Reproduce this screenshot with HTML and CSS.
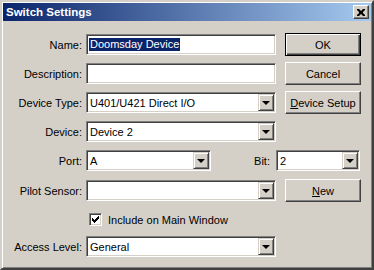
FILE: index.html
```html
<!DOCTYPE html>
<html lang="en">
<head>
    <meta charset="UTF-8">
    <title>Switch Settings</title>
    <link rel="stylesheet" href="styles.css">
</head>
<body>
    <div class="dialog">
        <div class="titlebar">
            <span class="title">Switch Settings</span>
            <button class="close-btn" aria-label="Close">
                <svg width="8" height="7" viewBox="0 0 8 7"><path d="M0 0h2l2 2 2-2h2v1l-2 2v1l2 2v1h-2l-2-2-2 2h-2v-1l2-2v-1l-2-2z" fill="#000"/></svg>
            </button>
        </div>

        <div class="content">
            <div class="row">
                <label class="label">Name:</label>
                <div class="field"><span class="selected">Doomsday Device</span></div>
                <button class="btn default">OK</button>
            </div>

            <div class="row">
                <label class="label">Description:</label>
                <div class="field"></div>
                <button class="btn">Cancel</button>
            </div>

            <div class="row">
                <label class="label">Device Type:</label>
                <div class="field select"><span class="value">U401/U421 Direct I/O</span><span class="arrow"></span></div>
                <button class="btn"><u>D</u>evice Setup</button>
            </div>

            <div class="row">
                <label class="label">Device:</label>
                <div class="field select"><span class="value">Device 2</span><span class="arrow"></span></div>
            </div>

            <div class="row port-row">
                <label class="label">Port:</label>
                <div class="field select port"><span class="value">A</span><span class="arrow"></span></div>
                <label class="bit-label">Bit:</label>
                <div class="field select bit"><span class="value">2</span><span class="arrow"></span></div>
            </div>

            <div class="row">
                <label class="label">Pilot Sensor:</label>
                <div class="field select"><span class="value"></span><span class="arrow"></span></div>
                <button class="btn"><u>N</u>ew</button>
            </div>

            <div class="row check-row">
                <span class="checkbox">
                    <svg width="7" height="7" viewBox="0 0 7 7"><path d="M0 2h1v1h1v1h1v-1h1v-1h1v-1h1v-1h1v3h-1v1h-1v1h-1v1h-1v1h-1v-1h-1v-1h-1z" fill="#000"/></svg>
                </span>
                <span class="check-text">Include on Main Window</span>
            </div>

            <div class="row">
                <label class="label">Access Level:</label>
                <div class="field select"><span class="value">General</span><span class="arrow"></span></div>
            </div>
        </div>
    </div>
</body>
</html>
```

FILE: styles.css
```css
html, body {
    margin: 0;
    padding: 0;
    background: #d4d0c8;
}
body {
    font-family: "Liberation Sans", Arial, sans-serif;
    font-size: 11px;
    color: #000;
}
.dialog {
    width: 374px;
    height: 270px;
    box-sizing: border-box;
    padding: 1px;
    border: 2px solid;
    border-color: #d4d0c8 #404040 #404040 #d4d0c8;
    box-shadow: inset 1px 1px #fff, inset -1px -1px #808080;
    background: #d4d0c8;
}
.titlebar {
    height: 18px;
    display: flex;
    align-items: center;
    justify-content: space-between;
    padding: 0 2px 0 3px;
    background: linear-gradient(to right, #0a246a, #a6caf0);
}
.title {
    color: #fff;
    font-family: "Liberation Sans", Tahoma, sans-serif;
    font-weight: bold;
    font-size: 11.5px;
}
.close-btn {
    width: 16px;
    height: 14px;
    padding: 0;
    display: flex;
    align-items: center;
    justify-content: center;
    background: #d4d0c8;
    border: 1px solid;
    border-color: #fff #404040 #404040 #fff;
    box-shadow: inset -1px -1px #808080;
}
.content {
    padding: 13px 0 0 0;
}
.row {
    display: flex;
    align-items: center;
    height: 21px;
    margin-bottom: 8px;
}
.port-row {
    margin-bottom: 9px;
}
.label {
    width: 79px;
    margin-right: 4px;
    text-align: right;
}
.field {
    width: 190px;
    height: 21px;
    box-sizing: border-box;
    display: flex;
    align-items: center;
    padding: 0 2px 0 3px;
    background: #fff;
    border: 1px solid;
    border-color: #808080 #fff #fff #808080;
    box-shadow: inset 1px 1px #404040, inset -1px -1px #d4d0c8;
}
.selected {
    background: #0a246a;
    color: #fff;
    line-height: 13px;
    padding: 0 1px;
    margin-left: -1px;
}
.select .value {
    flex: 1;
}
.arrow {
    width: 16px;
    height: 17px;
    box-sizing: border-box;
    position: relative;
    background: #d4d0c8;
    border: 1px solid;
    border-color: #d4d0c8 #404040 #404040 #d4d0c8;
    box-shadow: inset 1px 1px #fff, inset -1px -1px #808080;
    margin-right: -1px;
}
.arrow::after {
    content: "";
    position: absolute;
    left: 3px;
    top: 6px;
    border-left: 4px solid transparent;
    border-right: 4px solid transparent;
    border-top: 4px solid #000;
}
.port {
    width: 125px;
}
.bit-label {
    width: 59px;
    margin-right: 6px;
    text-align: right;
}
.bit {
    width: 84px;
}
.btn {
    width: 76px;
    height: 23px;
    margin-left: 9px;
    padding: 0;
    font-family: "Liberation Sans", Arial, sans-serif;
    font-size: 11px;
    color: #000;
    background: #d4d0c8;
    border: 1px solid;
    border-color: #fff #404040 #404040 #fff;
    box-shadow: inset -1px -1px #808080, inset 1px 1px #d4d0c8;
}
.btn.default {
    border: 1px solid #000;
    box-shadow: inset 1px 1px #fff, inset -1px -1px #404040, inset -2px -2px #808080;
}
.check-row {
    padding-left: 86px;
    margin-top: 2px;
    margin-bottom: 6px;
}
.checkbox {
    width: 13px;
    height: 13px;
    box-sizing: border-box;
    display: flex;
    align-items: center;
    justify-content: center;
    background: #fff;
    border: 1px solid;
    border-color: #808080 #fff #fff #808080;
    box-shadow: inset 1px 1px #404040, inset -1px -1px #d4d0c8;
}
.check-text {
    margin-left: 6px;
}
```
